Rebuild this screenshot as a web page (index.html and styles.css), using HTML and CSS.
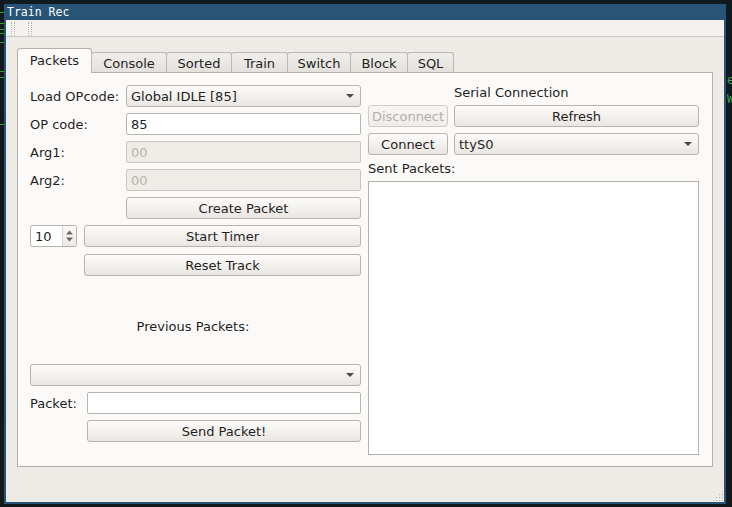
FILE: index.html
```html
<!DOCTYPE html>
<html>
<head>
<meta charset="utf-8">
<title>Train Rec</title>
<link rel="stylesheet" href="styles.css">
</head>
<body>
<div class="desktop">
  <div class="term-marks">
    <i class="tm" style="top:12px"></i>
    <i class="tm" style="top:23px"></i>
    <i class="tm" style="top:29px"></i>
    <i class="tm" style="top:33px"></i>
    <i class="tm" style="top:42px"></i>
    <i class="tm" style="top:71px"></i>
    <i class="tm" style="top:77px"></i>
    <i class="tm" style="top:124px"></i>
  </div>
  <span class="term-glyph g1">e</span>
  <span class="term-glyph g2">W</span>

  <div class="window">
    <div class="titlebar">Train Rec</div>
    <div class="toolbar">
      <span class="handle"></span>
      <span class="handle"></span>
    </div>
    <div class="central">
      <div class="tabbar">
        <div class="tab active">Packets</div>
        <div class="tab w-console">Console</div>
        <div class="tab w-sorted">Sorted</div>
        <div class="tab w-train">Train</div>
        <div class="tab w-switch">Switch</div>
        <div class="tab w-block">Block</div>
        <div class="tab w-sql">SQL</div>
      </div>
      <div class="pane">
        <div class="col col-left">
          <div class="row">
            <span class="label lbl-form">Load OPcode:</span>
            <div class="combo grow"><span class="combo-text">Global IDLE [85]</span><span class="arrow"></span></div>
          </div>
          <div class="row">
            <span class="label lbl-form">OP code:</span>
            <div class="edit grow">85</div>
          </div>
          <div class="row">
            <span class="label lbl-form">Arg1:</span>
            <div class="edit disabled grow">00</div>
          </div>
          <div class="row">
            <span class="label lbl-form">Arg2:</span>
            <div class="edit disabled grow">00</div>
          </div>
          <div class="row">
            <span class="lbl-form"></span>
            <button class="btn grow">Create Packet</button>
          </div>
          <div class="row">
            <div class="spin">
              <span class="spin-text">10</span>
              <span class="spin-arrows">
                <svg width="9" height="14" viewBox="0 0 9 14"><path d="M1 5.5 L4.5 1.5 L8 5.5 Z M1 8.5 L4.5 12.5 L8 8.5 Z" fill="#6b6863"/></svg>
              </span>
            </div>
            <button class="btn grow">Start Timer</button>
          </div>
          <div class="row row-reset">
            <span class="lbl-spin"></span>
            <button class="btn grow">Reset Track</button>
          </div>
          <div class="prev-label">Previous Packets:</div>
          <div class="row row-prev">
            <div class="combo grow"><span class="combo-text"></span><span class="arrow"></span></div>
          </div>
          <div class="row">
            <span class="label lbl-packet">Packet:</span>
            <div class="edit grow"></div>
          </div>
          <div class="row">
            <span class="lbl-packet"></span>
            <button class="btn grow">Send Packet!</button>
          </div>
        </div>

        <div class="col col-right">
          <div class="serial-label">Serial Connection</div>
          <div class="row row-serial">
            <button class="btn btn-side disabled">Disconnect</button>
            <button class="btn grow">Refresh</button>
          </div>
          <div class="row">
            <button class="btn btn-side">Connect</button>
            <div class="combo grow"><span class="combo-text">ttyS0</span><span class="arrow"></span></div>
          </div>
          <div class="sent-label">Sent Packets:</div>
          <div class="list"></div>
        </div>
      </div>
    </div>
    <svg class="grip" width="12" height="12" viewBox="0 0 12 12">
      <g fill="#b3afa9">
        <rect x="10" y="1" width="1" height="1"/>
        <rect x="7" y="4" width="1" height="1"/><rect x="10" y="4" width="1" height="1"/>
        <rect x="4" y="7" width="1" height="1"/><rect x="7" y="7" width="1" height="1"/><rect x="10" y="7" width="1" height="1"/>
        <rect x="1" y="10" width="1" height="1"/><rect x="4" y="10" width="1" height="1"/><rect x="7" y="10" width="1" height="1"/><rect x="10" y="10" width="1" height="1"/>
      </g>
    </svg>
  </div>
</div>
</body>
</html>
```

FILE: styles.css
```css
* { box-sizing: border-box; }

html, body {
  margin: 0;
  padding: 0;
  background: #0f181c;
}

.desktop {
  position: relative;
  width: 732px;
  height: 507px;
  overflow: hidden;
  background: linear-gradient(180deg, #101b20 0%, #0d1619 60%, #141a1b 100%);
  font-family: "DejaVu Sans", "Liberation Sans", sans-serif;
  font-size: 13px;
  color: #1f1f1f;
}

.term-marks .tm {
  position: absolute;
  left: 0;
  width: 4px;
  height: 1px;
  background: #2f9d2f;
}

.term-glyph {
  position: absolute;
  left: 727px;
  font-family: "DejaVu Sans Mono", monospace;
  font-size: 12px;
  line-height: 12px;
  color: #3aa83a;
}
.g1 { top: 74px; }
.g2 { top: 93px; }

.window {
  position: absolute;
  left: 4px;
  top: 4px;
  width: 722px;
  height: 500px;
  border: 2px solid #285577;
  border-top: 0;
  background: #eeebe7;
  display: flex;
  flex-direction: column;
}

.titlebar {
  height: 16px;
  background: #285577;
  color: #ffffff;
  font-family: "DejaVu Sans Mono", monospace;
  font-size: 11.5px;
  line-height: 16px;
  margin: 0 -2px;
  padding-left: 3px;
}

.toolbar {
  height: 17px;
  background: #f4f2ef;
  border-bottom: 1px solid #cbc7c2;
  display: flex;
  gap: 13px;
  padding: 2px 0 1px 5px;
}

.handle {
  width: 4px;
  height: 14px;
  border-left: 1px dotted #b9b5b0;
  border-right: 1px dotted #b9b5b0;
}

.central {
  flex: 1;
  padding: 12px 11px 0 11px;
  display: flex;
  flex-direction: column;
}

.tabbar {
  display: flex;
  height: 24px;
  align-items: flex-end;
  position: relative;
  z-index: 1;
  margin-bottom: -1px;
}

.tab {
  height: 21px;
  border: 1px solid #bcb8b3;
  border-bottom: 1px solid #b5b1ac;
  border-radius: 3px 3px 0 0;
  background: linear-gradient(180deg, #f0eeeb 0%, #e4e1dd 100%);
  margin-left: -1px;
  display: flex;
  align-items: center;
  justify-content: center;
  line-height: 1;
  padding-top: 1px;
}
.tab.active {
  height: 25px;
  width: 75px;
  margin-left: 0;
  background: #fcfaf8;
  border-color: #b5b1ac;
  border-bottom-color: #fcfaf8;
  padding-top: 0;
}
.w-console { width: 76px; }
.w-sorted { width: 66px; }
.w-train { width: 57px; }
.w-switch { width: 64px; }
.w-block { width: 58px; }
.w-sql { width: 47px; }

.pane {
  height: 395px;
  border: 1px solid #b5b1ac;
  background: #fcfaf8;
  display: flex;
  gap: 7px;
  padding: 12px 13px 0 12px;
}

.col {
  width: 331px;
  display: flex;
  flex-direction: column;
}

.row {
  display: flex;
  height: 22px;
  align-items: stretch;
  margin-bottom: 6px;
}
.row-reset { margin-top: 1px; }
.grow { flex: 1; }

.label {
  display: flex;
  align-items: center;
  white-space: nowrap;
}
.lbl-form { width: 96px; flex: none; }
.lbl-packet { width: 57px; flex: none; }
.lbl-spin { width: 54px; flex: none; }

.btn {
  font: inherit;
  color: #1f1f1f;
  border: 1px solid #b7b3ad;
  border-radius: 3px;
  background: linear-gradient(180deg, #fdfcfb 0%, #f3f1ee 50%, #e9e6e2 100%);
  padding: 0;
  margin: 0;
  line-height: 1;
  text-align: center;
}
.btn.disabled {
  color: #b3afaa;
  border-color: #cfcbc6;
  background: linear-gradient(180deg, #f8f6f4 0%, #efece9 100%);
}

.combo {
  display: flex;
  align-items: center;
  border: 1px solid #b7b3ad;
  border-radius: 3px;
  background: linear-gradient(180deg, #fdfcfb 0%, #f3f1ee 50%, #e9e6e2 100%);
  padding-left: 4px;
  padding-right: 6px;
}
.combo-text { flex: 1; white-space: nowrap; }
.arrow {
  width: 0;
  height: 0;
  border-left: 4px solid transparent;
  border-right: 4px solid transparent;
  border-top: 4px solid #4d4a47;
}

.edit {
  display: flex;
  align-items: center;
  border: 1px solid #b7b3ad;
  border-radius: 2px;
  background: #ffffff;
  padding-left: 4px;
}
.edit.disabled {
  background: #efece8;
  border-color: #c8c4bf;
  color: #b7b3ae;
}

.spin {
  width: 47px;
  flex: none;
  margin-right: 7px;
  display: flex;
  border: 1px solid #b7b3ad;
  border-radius: 2px;
  background: #ffffff;
}
.spin-text {
  flex: 1;
  display: flex;
  align-items: center;
  padding-left: 4px;
}
.spin-arrows {
  width: 14px;
  display: flex;
  align-items: center;
  justify-content: center;
  border-left: 1px solid #d6d2cd;
  background: linear-gradient(180deg, #fbfaf9 0%, #ebe8e5 100%);
}

.prev-label {
  height: 22px;
  margin-top: 33px;
  margin-bottom: 27px;
  display: flex;
  align-items: center;
  justify-content: center;
  padding-right: 5px;
}

.serial-label {
  height: 14px;
  line-height: 14px;
  padding-left: 86px;
  margin-top: 1px;
  margin-bottom: 5px;
}
.btn-side { width: 80px; flex: none; margin-right: 6px; }

.sent-label {
  height: 16px;
  line-height: 16px;
  margin-top: 0;
  margin-bottom: 4px;
}

.list {
  height: 274px;
  border: 1px solid #b5b1ac;
  background: #ffffff;
}

.grip {
  position: absolute;
  right: 0;
  bottom: 0;
}
```
